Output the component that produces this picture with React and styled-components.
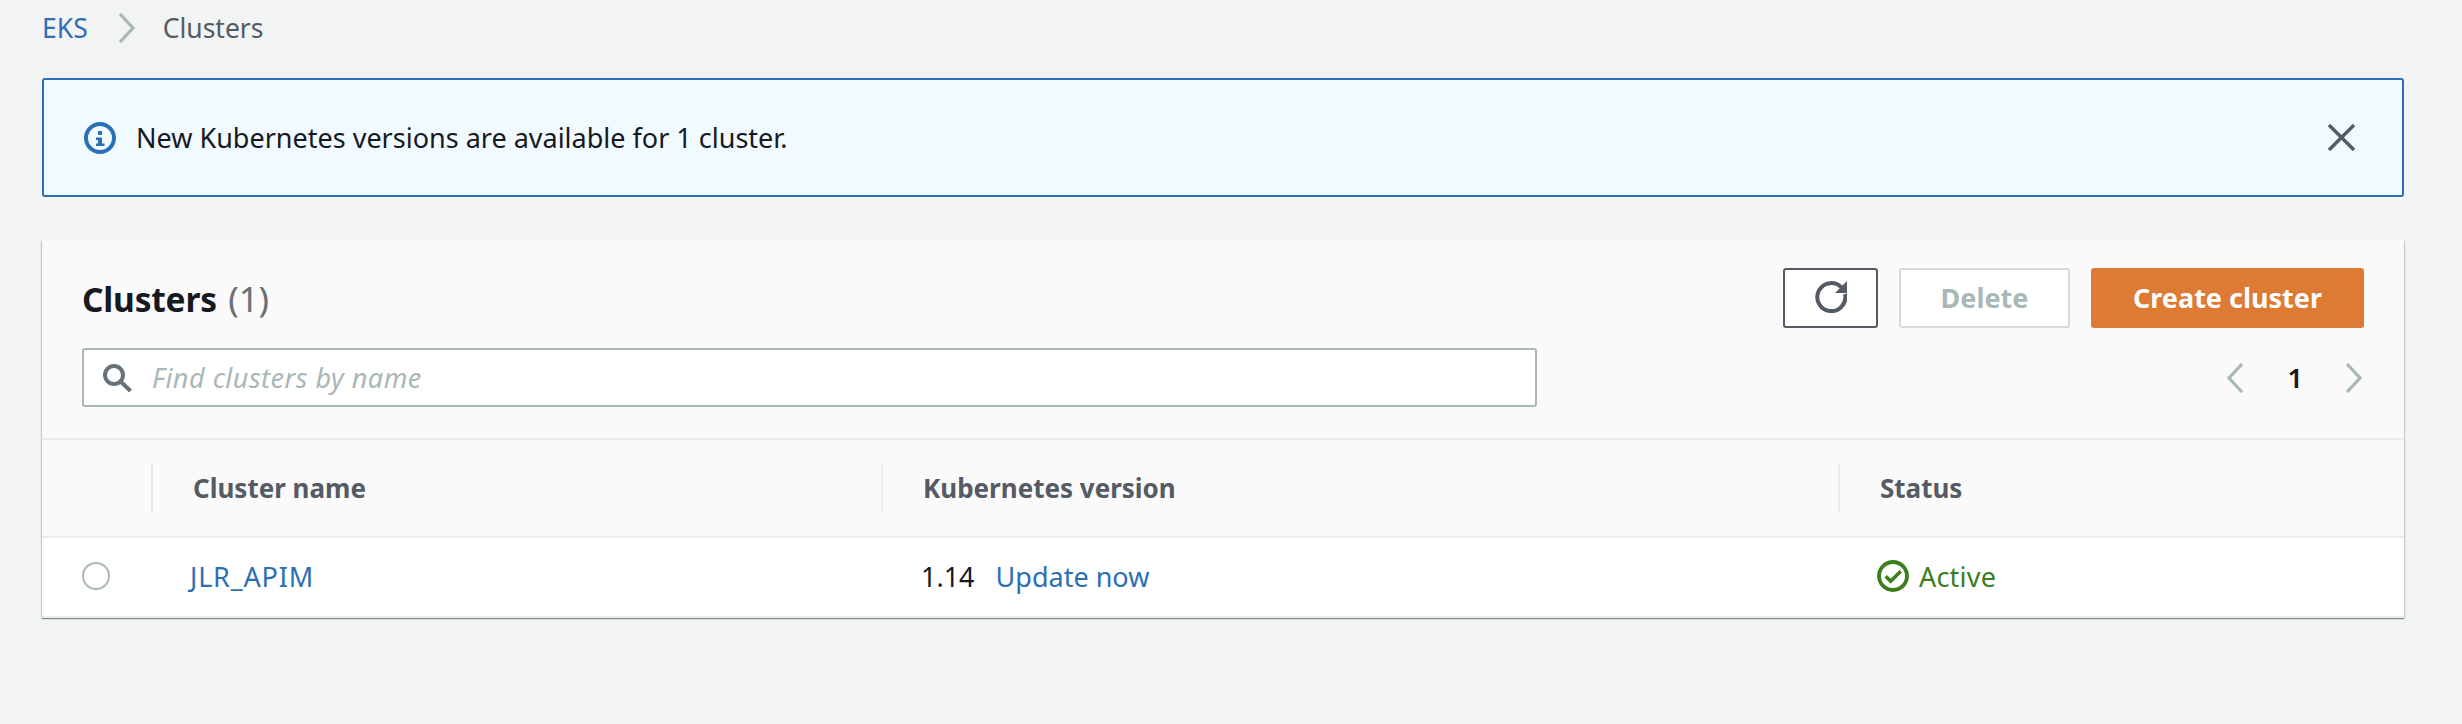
import styled, { createGlobalStyle } from 'styled-components'

const GlobalStyle = createGlobalStyle`
    html, body {
        margin: 0;
        padding: 0;
        background-color: #f2f3f3;
    }
    body {
        font-family: "Noto Sans", "Liberation Sans", sans-serif;
        color: #16191f;
    }
`

const Page = styled.div`
    width: 2462px;
    height: 724px;
    box-sizing: border-box;
    padding: 0 58px 0 42px;
    overflow: hidden;
`

const Breadcrumbs = styled.nav`
    height: 56px;
    display: flex;
    align-items: center;
    font-size: 26.5px;
    color: #545b64;
    svg {
        margin: 0 27px 0 30px;
    }
`

const Link = styled.a`
    color: #2d6fb4;
    margin-left: ${(props) => props.gap || 0}px;
    letter-spacing: ${(props) => props.spacing || 0}px;
`

const Alert = styled.div`
    margin-top: 22px;
    height: 119px;
    box-sizing: border-box;
    border: 2px solid #2b70b6;
    border-radius: 3px;
    background-color: #f1faff;
    padding: 0 47px 0 40px;
    display: flex;
    align-items: center;
    font-size: 27px;
    svg:first-child {
        margin-right: 20px;
    }
    span {
        flex: 1;
    }
`

const Panel = styled.section`
    margin-top: 43px;
    background-color: #fafafa;
    box-shadow: 0 1px 1px 0 rgba(0, 28, 36, 0.3), 1px 1px 1px 0 rgba(0, 28, 36, 0.15), -1px 1px 1px 0 rgba(0, 28, 36, 0.15);
`

const PanelHeader = styled.div`
    height: 200px;
    box-sizing: border-box;
    padding: 28px 40px 0 40px;
    border-bottom: 2px solid #eaeded;
`

const HeaderRow = styled.div`
    display: flex;
    justify-content: space-between;
    align-items: center;
    height: 60px;
`

const Title = styled.h2`
    margin: 0;
    font-size: 33.5px;
    font-weight: 700;
    letter-spacing: -0.2px;
    color: #16191f;
    span {
        margin-left: 3px;
        font-weight: 400;
        font-size: 35px;
        color: #687078;
    }
`

const Actions = styled.div`
    display: flex;
    gap: 21px;
`

const Button = styled.button`
    height: 60px;
    width: ${(props) => props.width}px;
    box-sizing: border-box;
    border-radius: 3px;
    border: 2px solid ${(props) => props.border};
    background-color: ${(props) => props.bg};
    color: ${(props) => props.color};
    font-family: inherit;
    font-size: 27px;
    font-weight: 700;
    padding: 0 0 2px;
    display: flex;
    align-items: center;
    justify-content: center;
`

const ToolRow = styled.div`
    display: flex;
    justify-content: space-between;
    align-items: center;
    margin-top: 20px;
`

const Search = styled.div`
    width: 1455px;
    height: 59px;
    box-sizing: border-box;
    border: 2px solid #aab7b8;
    border-radius: 3px;
    background-color: #fff;
    padding-left: 19px;
    display: flex;
    align-items: center;
    gap: 20px;
    font-size: 27px;
    font-style: italic;
    letter-spacing: 0.5px;
    color: #aab7b8;
`

const Pagination = styled.div`
    display: flex;
    align-items: center;
    font-size: 27px;
    font-weight: 600;
    margin-right: 1px;
    span {
        margin: 0 42px 0 44px;
    }
`

const Row = styled.div`
    display: grid;
    grid-template-columns: 109px 730px 957px 1fr;
    align-items: center;
    height: ${(props) => props.height}px;
    box-sizing: border-box;
    background-color: ${(props) => props.bg};
    border-bottom: 2px solid #eaeded;
`

const HeadCell = styled.div`
    height: 48px;
    box-sizing: border-box;
    border-left: 2px solid ${(props) => (props.first ? 'transparent' : '#eaeded')};
    padding-left: 40px;
    display: flex;
    align-items: center;
    font-size: 26px;
    font-weight: 700;
    color: #545b64;
`

const Cell = styled.div`
    padding: 0 0 2px ${(props) => props.pad}px;
    display: flex;
    align-items: center;
    font-size: 27px;
`

const Radio = styled.span`
    width: 28px;
    height: 28px;
    box-sizing: border-box;
    border: 2px solid #aab7b8;
    border-radius: 50%;
    background-color: #fff;
`

const Status = styled.span`
    display: flex;
    align-items: center;
    gap: 10px;
    letter-spacing: 0.2px;
    color: #3b7e1e;
`

const Chevron = ({ dir, color }) => (
    <svg width="18" height="30" viewBox="0 0 18 30" fill="none">
        <path
            d={dir === 'left' ? 'M16 1 L3 15 L16 29' : 'M2 1 L15 15 L2 29'}
            stroke={color}
            strokeWidth="3.2"
        />
    </svg>
)

const App = () => {
    return (
        <Page>
            <GlobalStyle />
            <Breadcrumbs>
                <Link>EKS</Link>
                <Chevron dir="right" color="#aab7b8" />
                Clusters
            </Breadcrumbs>
            <Alert>
                <svg width="32" height="32" viewBox="0 0 32 32" fill="none">
                    <circle cx="16" cy="16" r="14" stroke="#2b70b6" strokeWidth="4" />
                    <path d="M14 9 H18 V13 H14 Z M12 15.5 H18 V21.5 H20.5 V24 H12 V21.5 H14 V18 H12 Z" fill="#2b70b6" />
                </svg>
                <span>New Kubernetes versions are available for 1 cluster.</span>
                <svg width="27" height="27" viewBox="0 0 27 27" fill="none">
                    <path d="M1 1 L26 26 M26 1 L1 26" stroke="#545b64" strokeWidth="3.4" />
                </svg>
            </Alert>
            <Panel>
                <PanelHeader>
                    <HeaderRow>
                        <Title>
                            Clusters <span>(1)</span>
                        </Title>
                        <Actions>
                            <Button width={95} border="#545b64" bg="#fff" color="#545b64">
                                <svg width="32" height="32" viewBox="0 0 32 32" fill="none">
                                    <path d="M30 13 A14 14 0 1 1 27 7" stroke="#545b64" strokeWidth="4" />
                                    <path d="M32 0 V12 H20 Z" fill="#545b64" />
                                </svg>
                            </Button>
                            <Button width={171} border="#d5dbdb" bg="#fff" color="#aab7b8">
                                Delete
                            </Button>
                            <Button width={273} border="#dd7a33" bg="#dd7a33" color="#fff">
                                Create cluster
                            </Button>
                        </Actions>
                    </HeaderRow>
                    <ToolRow>
                        <Search>
                            <svg width="29" height="28" viewBox="0 0 29 28" fill="none">
                                <circle cx="11" cy="11" r="9" stroke="#687078" strokeWidth="4" />
                                <path d="M17.5 17.5 L27.5 27" stroke="#687078" strokeWidth="4" />
                            </svg>
                            Find clusters by name
                        </Search>
                        <Pagination>
                            <Chevron dir="left" color="#aab7b8" />
                            <span>1</span>
                            <Chevron dir="right" color="#aab7b8" />
                        </Pagination>
                    </ToolRow>
                </PanelHeader>
                <Row height={98} bg="#fafafa">
                    <HeadCell first />
                    <HeadCell>Cluster name</HeadCell>
                    <HeadCell>Kubernetes version</HeadCell>
                    <HeadCell>Status</HeadCell>
                </Row>
                <Row height={80} bg="#fff">
                    <Cell pad={40}>
                        <Radio />
                    </Cell>
                    <Cell pad={39}>
                        <Link spacing={0.8}>JLR_APIM</Link>
                    </Cell>
                    <Cell pad={40}>
                        1.14
                        <Link gap={21}>Update now</Link>
                    </Cell>
                    <Cell pad={39}>
                        <Status>
                            <svg width="32" height="32" viewBox="0 0 32 32" fill="none">
                                <circle cx="16" cy="16" r="14" stroke="#3b7e1e" strokeWidth="3.8" />
                                <path d="M8.7 16.3 L13.7 21.3 L23.7 11.3" stroke="#3b7e1e" strokeWidth="3.6" />
                            </svg>
                            Active
                        </Status>
                    </Cell>
                </Row>
            </Panel>
        </Page>
    )
}

export default App
